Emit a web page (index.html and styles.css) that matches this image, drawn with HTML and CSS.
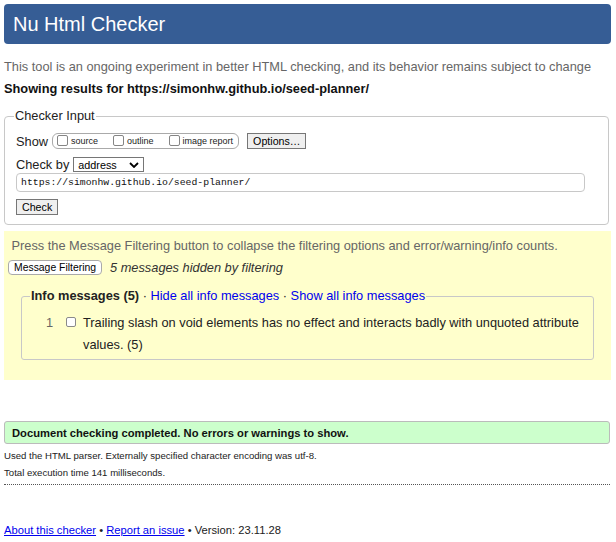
FILE: index.html
```html
<!DOCTYPE html>
<html lang="en">
<head>
<meta charset="utf-8">
<title>Showing results for https://simonhw.github.io/seed-planner/ - Nu Html Checker</title>
<link rel="stylesheet" href="styles.css">
</head>
<body>
<h1 class="title">Nu Html Checker</h1>
<p class="intro">This tool is an ongoing experiment in better HTML checking, and its behavior remains subject to change</p>
<p class="showing">Showing results for https://simonhw.github.io/seed-planner/</p>

<fieldset class="checker">
  <legend>Checker Input</legend>
  <div class="row show-row">
    <span class="lbl">Show</span>
    <span class="show-group">
      <label class="opt"><input type="checkbox" class="box"><span>source</span></label>
      <label class="opt"><input type="checkbox" class="box"><span>outline</span></label>
      <label class="opt"><input type="checkbox" class="box"><span>image report</span></label>
    </span>
    <button type="button" class="btn btn-options">Options…</button>
  </div>
  <div class="row by-row">
    <span class="lbl">Check by</span>
    <span class="select">
      <span class="select-text">address</span>
      <svg class="chev" width="10" height="6" viewBox="0 0 10 6"><path d="M1 1 L5 5 L9 1" fill="none" stroke="#000" stroke-width="1.8"/></svg>
    </span>
  </div>
  <input class="url" type="text" value="https://simonhw.github.io/seed-planner/">
  <button type="button" class="btn btn-check">Check</button>
</fieldset>

<section class="filters">
  <p class="filters-note">Press the Message Filtering button to collapse the filtering options and error/warning/info counts.</p>
  <div class="filter-row">
    <button type="button" class="filter-btn">Message Filtering</button>
    <span class="hidden-note">5 messages hidden by filtering</span>
  </div>
  <fieldset class="info">
    <legend><strong>Info messages (5)</strong> · <a href="#">Hide all info messages</a> · <a href="#">Show all info messages</a></legend>
    <ol class="msgs">
      <li class="msg">
        <span class="num">1</span>
        <input type="checkbox" class="box small">
        <span class="msg-text">Trailing slash on void elements has no effect and interacts badly with unquoted attribute values. (5)</span>
      </li>
    </ol>
  </fieldset>
</section>

<p class="success">Document checking completed. No errors or warnings to show.</p>
<div class="details">
  <p>Used the HTML parser. Externally specified character encoding was utf-8.</p>
  <p>Total execution time 141 milliseconds.</p>
</div>
<hr class="sep">
<p class="footer"><a href="#">About this checker</a> • <a href="#">Report an issue</a> • Version: 23.11.28</p>
</body>
</html>
```
FILE: styles.css
```css
* { box-sizing: border-box; }
html { background: #fff; }
body {
  margin: 0;
  padding: 4px 5px 0 4px;
  font-family: "Liberation Sans", Arial, Helvetica, sans-serif;
  font-size: 12.8px;
  color: #222;
}
a { color: #00e; text-decoration: none; }

.title {
  margin: 0;
  height: 40px;
  padding: 0 9px;
  display: flex;
  align-items: center;
  background: #365d95;
  color: #fff;
  font-size: 20px;
  font-weight: normal;
  border-radius: 4px;
}
.intro { margin: 15px 0 0; line-height: 16px; color: #666; }
.showing { margin: 6px 0 0; line-height: 16px; font-weight: bold; color: #111; }

.checker {
  margin: 11px 2px 0 0;
  padding: 9px 11px 9px;
  border: 1px solid #c8c8c8;
  border-radius: 4px;
  min-width: 0;
}
.checker > legend { padding: 0 1px; margin-left: -2px; line-height: 16px; color: #222; }

.row { display: flex; align-items: center; }
.show-row { height: 16px; }
.lbl { margin-right: 4px; }
.show-group {
  display: flex;
  align-items: flex-end;
  gap: 15px;
  height: 16px;
  padding: 0 5px 2px 4px;
  border: 1px solid #aaa;
  border-radius: 6px;
}
.opt { display: flex; align-items: flex-end; gap: 3px; font-size: 9px; line-height: 10px; color: #222; }
.box {
  appearance: none;
  -webkit-appearance: none;
  display: block;
  width: 11px;
  height: 11px;
  margin: 0;
  border: 1px solid #858585;
  border-radius: 2px;
  background: #fff;
}
.btn {
  height: 16px;
  padding: 0 5px;
  font-family: "Liberation Sans", Arial, sans-serif;
  font-size: 10.67px;
  line-height: 14px;
  color: #000;
  background: #efefef;
  border: 1px solid #767676;
  border-radius: 0;
}
.btn-options { margin-left: 8px; width: 59px; }

.by-row { margin-top: 8px; height: 15px; }
.select {
  display: flex;
  align-items: center;
  justify-content: space-between;
  width: 71px;
  height: 15px;
  padding: 0 4px 0 4px;
  border: 1px solid #767676;
  background: #fff;
  font-size: 10.8px;
  color: #000;
}
.chev { display: block; }

.url {
  display: block;
  width: 569px;
  height: 19px;
  margin: 1px 0 0;
  padding: 0 4px;
  border: 1px solid #c8c8c8;
  border-radius: 4px;
  font-family: "Liberation Mono", "Courier New", monospace;
  font-size: 9.8px;
  color: #111;
  background: #fff;
}
.btn-check { display: block; margin-top: 7px; width: 42px; }

.filters { margin-top: 6px; padding: 7px 4px 20px 4px; background: #ffffcc; }
.filters-note { margin: 0 0 0 3.5px; line-height: 15px; color: #666; }
.filter-row { display: flex; align-items: center; gap: 8px; margin-top: 7px; height: 15px; }
.filter-btn {
  height: 15px;
  padding: 0 5px;
  font-family: "Liberation Sans", Arial, sans-serif;
  font-size: 10.4px;
  line-height: 13px;
  color: #000;
  background: #fff;
  border: 1px solid #aaa;
  border-radius: 4px;
}
.hidden-note { font-style: italic; color: #333; }

.info {
  margin: 13px 13px 0 13px;
  padding: 8px 9px 3px 9px;
  border: 1px solid #c8c8c8;
  border-radius: 3px;
  min-width: 0;
}
.info > legend { padding: 0 1px; margin-left: -1px; line-height: 16px; color: #222; }
.msgs { margin: 0; padding: 0; list-style: none; }
.msg { display: flex; align-items: flex-start; line-height: 22px; color: #222; }
.num { flex: 0 0 22px; text-align: right; color: #666; }
.box.small { flex: 0 0 10px; width: 10px; height: 10px; margin: 5px 7px 0 13px; border-color: #8a8a8a; }
.msg-text { flex: 1; }

.success {
  margin: 41px 1px 0 0;
  height: 23px;
  display: flex;
  align-items: center;
  padding-left: 7px;
  background: #ccffcc;
  border: 1px solid #bbb;
  border-radius: 3px;
  font-weight: bold;
  font-size: 11.2px;
  color: #111;
}
.details p { margin: 6px 0 0; font-size: 9.6px; line-height: 11px; color: #222; }
.details p:first-child { margin-top: 5.5px; }
.sep { margin: 6.5px 1px 0 0; border: 0; border-top: 1px dotted #555; height: 0; }
.footer { margin: 39px 0 0; font-size: 11.2px; line-height: 13px; color: #222; }
.footer a { text-decoration: underline; }
```
